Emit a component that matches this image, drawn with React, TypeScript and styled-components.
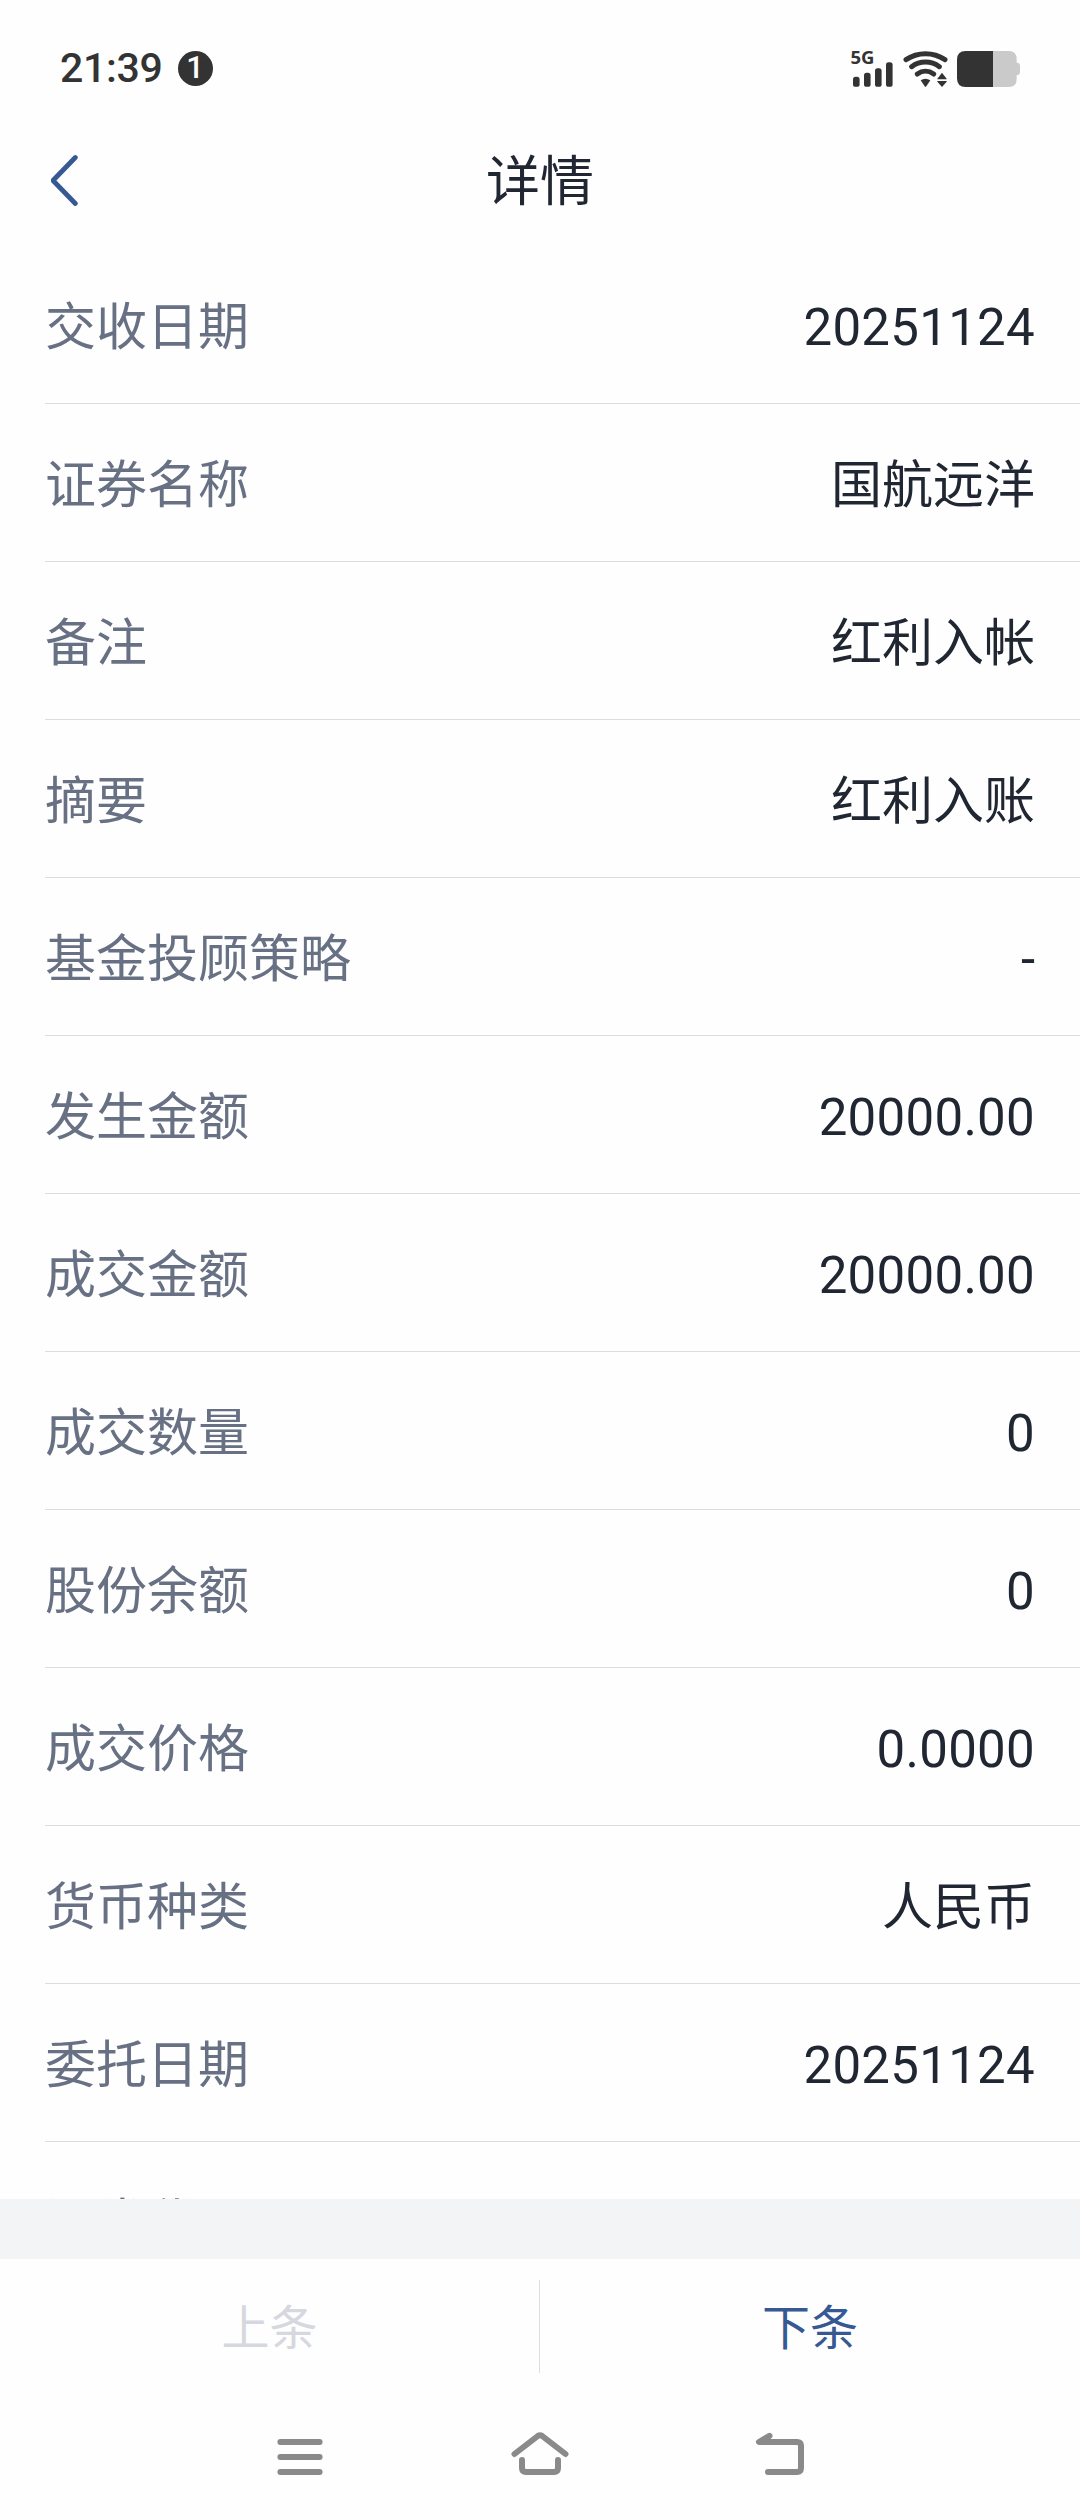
import React from "react";
import styled, { createGlobalStyle } from "styled-components";

const GlobalStyle = createGlobalStyle`
  * { box-sizing: border-box; }
  body {
    margin: 0;
    background: #fefefe;
    font-family: Roboto, "Noto Sans CJK SC", sans-serif;
  }
`;

const Screen = styled.div`
  display: flex;
  flex-direction: column;
  width: 1080px;
  height: 2520px;
  overflow: hidden;
  background: #fefefe;
`;

const StatusBar = styled.header`
  display: flex;
  justify-content: space-between;
  align-items: center;
  height: 114px;
  padding: 23px 60px 0;
  color: #333333;
`;

const StatusGroup = styled.div<{ $gap: number }>`
  display: flex;
  align-items: center;
  gap: ${(p) => p.$gap}px;
`;

const Clock = styled.time`
  width: 102px;
  padding-bottom: 1px;
  font-size: 41px;
  font-weight: 500;
  line-height: 48px;
  letter-spacing: -0.3px;
  white-space: nowrap;
`;

const Badge = styled.span`
  display: flex;
  align-items: center;
  justify-content: center;
  width: 35px;
  height: 35px;
  padding: 0 1px 1px 0;
  border-radius: 50%;
  background: #333333;
  color: #fefefe;
  font-size: 31px;
  font-weight: 500;
  line-height: 34px;
`;

const Icon = styled.svg`
  display: block;
  flex: none;
`;

const TitleBar = styled.nav`
  display: grid;
  grid-template-columns: 1fr auto 1fr;
  align-items: center;
  height: 132px;
`;

const BackButton = styled.button`
  justify-self: start;
  padding: 0 51px;
  border: 0;
  background: none;
`;

const Title = styled.h1`
  margin: 0;
  padding-top: 5px;
  color: #202632;
  font-size: 54px;
  font-weight: 400;
  line-height: 80px;
`;

const DetailList = styled.main`
  height: 1953px;
  overflow: hidden;
  padding-left: 45px;
`;

const Row = styled.div`
  display: flex;
  align-items: center;
  justify-content: space-between;
  height: 158px;
  padding: 6px 45px 0 0;
  border-bottom: 1px solid #dcdddf;
  font-size: 51px;
  line-height: 76px;
`;

const Label = styled.span`
  color: #687184;
`;

const Value = styled.span<{ $numeric: boolean }>`
  color: #202632;
  letter-spacing: ${(p) => (p.$numeric ? "0.28px" : "normal")};
`;

const Spacer = styled.div`
  height: 60px;
  background: #f3f4f6;
`;

const Pager = styled.div`
  display: grid;
  grid-template-columns: 539px 1px 1fr;
  align-items: center;
  height: 135px;
`;

const PagerButton = styled.button<{ $color: string }>`
  padding: 4px 0 0;
  border: 0;
  background: none;
  color: ${(p) => p.$color};
  font: inherit;
  font-size: 48px;
  line-height: 72px;
`;

const PagerDivider = styled.i`
  height: 93px;
  background: #dcdddf;
`;

const SystemNav = styled.footer`
  display: flex;
  align-items: center;
  justify-content: center;
  gap: 180px;
  height: 126px;
`;

const rows: [string, string][] = [
  ["交收日期", "20251124"],
  ["证券名称", "国航远洋"],
  ["备注", "红利入帐"],
  ["摘要", "红利入账"],
  ["基金投顾策略", "-"],
  ["发生金额", "20000.00"],
  ["成交金额", "20000.00"],
  ["成交数量", "0"],
  ["股份余额", "0"],
  ["成交价格", "0.0000"],
  ["货币种类", "人民币"],
  ["委托日期", "20251124"],
  ["证券代码", ""],
];

const SignalIcon = () => (
  <Icon width="43" height="52" viewBox="0 -7 43 52" fill="#333333">
    <text x="-0.500" y="14.200" fontFamily="Open Sans, sans-serif" fontWeight="700" fontSize="18.500">5G</text>
    <rect x="2" y="26.800" width="6.600" height="10" rx="2.600" />
    <rect x="13" y="22.800" width="6.600" height="14" rx="2.600" />
    <rect x="24" y="18.200" width="6.600" height="18.600" rx="2.600" />
    <rect x="35" y="12.200" width="6.600" height="24.600" rx="2.600" />
  </Icon>
);

const WifiIcon = () => (
  <Icon width="45" height="38" viewBox="249 57 135 114" fill="#333333">
    <g fill="none" stroke="#333333" strokeWidth="15" strokeLinecap="round">
      <path d="M258 86A104 104 0 0 1 375 86" />
      <path d="M275 107A70 70 0 0 1 358 107" />
      <path d="M292 129A42 42 0 0 1 341 129" />
    </g>
    <path d="M302 148Q316 139 331 148L319 166Q316.500 169 314 166Z" />
    <path d="M366 125L380 143V145H352V143ZM352 150H380V152L366 168L352 152Z" />
  </Icon>
);

const BatteryIcon = () => (
  <Icon width="63" height="38" viewBox="411 57 189 114">
    <path d="M519 60H566Q590 60 590 84V95Q600 95 600 105V122Q600 132 590 132V144Q590 168 566 168H519Z" fill="#cacaca" />
    <path d="M519 60H437Q411 60 411 86V142Q411 168 437 168H519Z" fill="#333333" />
  </Icon>
);

const NavIcon = ({ d }: { d: string }) => (
  <Icon width="60" height="60" viewBox="0 0 60 60" fill="none" stroke="#8a8a8a" strokeWidth="6" strokeLinecap="round" strokeLinejoin="round">
    <path d={d} />
  </Icon>
);

export default function App() {
  return (
    <Screen lang="zh-CN">
      <GlobalStyle />
      <StatusBar>
        <StatusGroup $gap={16}>
          <Clock>21:39</Clock>
          <Badge>1</Badge>
        </StatusGroup>
        <StatusGroup $gap={9}>
          <SignalIcon />
          <WifiIcon />
          <BatteryIcon />
        </StatusGroup>
      </StatusBar>
      <TitleBar>
        <BackButton aria-label="返回">
          <Icon width="30" height="54" viewBox="0 0 30 54" fill="none" stroke="#375993" strokeWidth="4.800" strokeLinecap="round" strokeLinejoin="round">
            <path d="M24.300 4.500L2 27.500L24.300 50.500" />
          </Icon>
        </BackButton>
        <Title>详情</Title>
      </TitleBar>
      <DetailList>
        {rows.map(([label, value]) => (
          <Row key={label}>
            <Label>{label}</Label>
            <Value $numeric={/^\d/.test(value)}>{value}</Value>
          </Row>
        ))}
      </DetailList>
      <Spacer />
      <Pager>
        <PagerButton $color="#d5d8de" disabled>上条</PagerButton>
        <PagerDivider />
        <PagerButton $color="#375993">下条</PagerButton>
      </Pager>
      <SystemNav>
        <NavIcon d="M10.400 15H49.600M10.400 30H49.600M10.400 45H49.600" />
        <NavIcon d="M4.500 27L27.800 9Q30 7.400 32.200 9L55.500 27M12 33V41Q12 45 16 45H44Q48 45 48 41V33" />
        <NavIcon d="M19.500 8.800L9 15H47Q51 15 51 19V41Q51 45 47 45H18" />
      </SystemNav>
    </Screen>
  );
}
